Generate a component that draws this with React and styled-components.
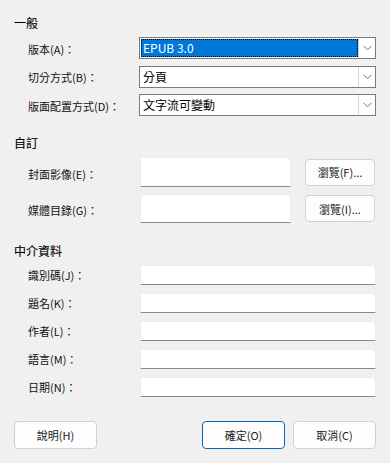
import React from "react";
import styled, { createGlobalStyle } from "styled-components";

const Global = createGlobalStyle`
  html, body { margin: 0; padding: 0; background: #f0f0f0; }
  body { font-family: "Noto Sans CJK TC", "Noto Sans", sans-serif; color: #000; }
`;

const Dialog = styled.div`
  width: 390px;
  height: 463px;
  box-sizing: border-box;
  padding: 14.5px 14px 0 14px;
  display: flex;
  flex-direction: column;
  background: #f0f0f0;
`;

const SectionTitle = styled.div`
  font-size: 12px;
  line-height: 16px;
  height: 16px;
  margin-top: ${(p) => p.$top || 0}px;
  -webkit-text-stroke: 0.1px #000;
`;

const Rows = styled.div`
  display: grid;
  grid-template-columns: 111px 1fr;
  row-gap: ${(p) => p.$gap}px;
  margin-top: ${(p) => p.$top}px;
  padding-left: 14px;
  align-items: center;
`;

const Label = styled.div`
  font-size: 11px;
  line-height: 14px;
  color: #111;
  white-space: nowrap;
  padding-top: ${(p) => (p.$drop ? 3 : 1)}px;
`;

const Combo = styled.div`
  height: 22px;
  box-sizing: border-box;
  border: 1px solid #7a7a7a;
  background: #fff;
  display: flex;
  padding: 1px 0 1px 1px;
`;

const ComboValue = styled.div`
  flex: 1;
  box-sizing: border-box;
  font-size: 12px;
  line-height: 16px;
  padding: 0 0 0 1px;
  border: 1px dotted ${(p) => (p.$selected ? "#000" : "transparent")};
  background: ${(p) => (p.$selected ? "#0078d7" : "#fff")};
  color: ${(p) => (p.$selected ? "#fff" : "#000")};
  white-space: nowrap;
  overflow: hidden;
`;

const ComboButton = styled.div`
  width: 17px;
  margin-top: -1px;
  margin-bottom: -1px;
  box-sizing: border-box;
  border-left: 1px solid #d4d4d4;
  background: #fff;
  display: flex;
  align-items: center;
  justify-content: center;
`;

const Chevron = () => (
  <svg width="9" height="6" viewBox="0 0 9 6">
    <path d="M0.5 0.8 L4.5 4.8 L8.5 0.8" fill="none" stroke="#606060" strokeWidth="0.9" />
  </svg>
);

const BrowseRow = styled.div`
  display: flex;
  align-items: center;
  gap: 14px;
  padding-left: 1px;
`;

const TextField = styled.div`
  flex: ${(p) => (p.$grow ? 1 : "none")};
  width: ${(p) => (p.$w ? `${p.$w}px` : "auto")};
  height: ${(p) => p.$h}px;
  box-sizing: border-box;
  background: #fff;
  border: 1px solid #ececec;
  border-bottom: 1px solid #8a8a8a;
  border-radius: 3px 3px 1px 1px;
  margin-left: ${(p) => (p.$ml ? 1 : 0)}px;
`;

const Button = styled.button`
  width: ${(p) => p.$w}px;
  height: ${(p) => p.$h}px;
  box-sizing: border-box;
  background: #fdfdfd;
  border: 1px solid ${(p) => (p.$primary ? "#0067c0" : "#d0d0d0")};
  border-radius: 4px;
  font-family: "Noto Sans CJK TC", "Noto Sans", sans-serif;
  font-size: 11px;
  color: #1a1a1a;
  padding: 0;
  display: flex;
  align-items: center;
  justify-content: center;
`;

const Footer = styled.div`
  margin-top: 24px;
  display: flex;
  align-items: center;
  gap: 8px;
`;

const Spacer = styled.div`
  flex: 1;
`;

const combos = [
  { label: "版本(A)：", value: "EPUB 3.0", selected: true },
  { label: "切分方式(B)：", value: "分頁" },
  { label: "版面配置方式(D)：", value: "文字流可變動" },
];

const browse = [
  { label: "封面影像(E)：", btn: "瀏覽(F)...", h: 30 },
  { label: "媒體目錄(G)：", btn: "瀏覽(I)...", h: 29 },
];

const meta = ["識別碼(J)：", "題名(K)：", "作者(L)：", "語言(M)：", "日期(N)："];

export default function App() {
  return (
    <>
      <Global />
      <Dialog>
        <SectionTitle>一般</SectionTitle>
        <Rows $gap={6.5} $top={6.5}>
          {combos.map((c) => (
            <React.Fragment key={c.label}>
              <Label>{c.label}</Label>
              <Combo>
                <ComboValue $selected={c.selected}>{c.value}</ComboValue>
                <ComboButton>
                  <Chevron />
                </ComboButton>
              </Combo>
            </React.Fragment>
          ))}
        </Rows>

        <SectionTitle $top={19}>自訂</SectionTitle>
        <Rows $gap={7} $top={6}>
          {browse.map((b) => (
            <React.Fragment key={b.label}>
              <Label $drop>{b.label}</Label>
              <BrowseRow>
                <TextField $w={151} $h={b.h} />
                <Button $w={70} $h={27}>{b.btn}</Button>
              </BrowseRow>
            </React.Fragment>
          ))}
        </Rows>

        <SectionTitle $top={19.5}>中介資料</SectionTitle>
        <Rows $gap={7.5} $top={6}>
          {meta.map((m) => (
            <React.Fragment key={m}>
              <Label>{m}</Label>
              <TextField $grow $ml $h={20.5} />
            </React.Fragment>
          ))}
        </Rows>

        <Footer>
          <Button $w={83} $h={28}>說明(H)</Button>
          <Spacer />
          <Button $w={83} $h={28} $primary>確定(O)</Button>
          <Button $w={83} $h={28}>取消(C)</Button>
        </Footer>
      </Dialog>
    </>
  );
}
